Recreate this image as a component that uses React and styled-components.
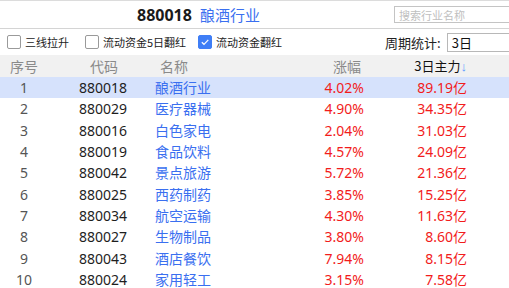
import styled, { createGlobalStyle } from "styled-components";

const GlobalStyle = createGlobalStyle`
  html, body {
    margin: 0;
    padding: 0;
    background: #fff;
    overflow: hidden;
  }
  body {
    font-family: "Noto Sans", "Noto Sans CJK SC", sans-serif;
  }
`;

const rows = [
  { no: 1, code: "880018", name: "酿酒行业", change: "4.02%", main: "89.19亿" },
  { no: 2, code: "880029", name: "医疗器械", change: "4.90%", main: "34.35亿" },
  { no: 3, code: "880016", name: "白色家电", change: "2.04%", main: "31.03亿" },
  { no: 4, code: "880019", name: "食品饮料", change: "4.57%", main: "24.09亿" },
  { no: 5, code: "880042", name: "景点旅游", change: "5.72%", main: "21.36亿" },
  { no: 6, code: "880025", name: "西药制药", change: "3.85%", main: "15.25亿" },
  { no: 7, code: "880034", name: "航空运输", change: "4.30%", main: "11.63亿" },
  { no: 8, code: "880027", name: "生物制品", change: "3.80%", main: "8.60亿" },
  { no: 9, code: "880043", name: "酒店餐饮", change: "7.94%", main: "8.15亿" },
  { no: 10, code: "880024", name: "家用轻工", change: "3.15%", main: "7.58亿" },
];

const Container = styled.div`
  width: 100%;
  height: 288px;
  overflow: hidden;
  border-top: 1px solid #dcdcdc;
  box-sizing: border-box;
`;

const Top = styled.div`
  height: 27px;
  display: flex;
  align-items: center;
  padding-left: 137px;
  border-bottom: 1px solid #d4d4d4;
  overflow: hidden;
`;

const Code = styled.span`
  font-size: 16px;
  font-weight: 700;
  color: #1a1a1a;
  width: 63px;
  flex-shrink: 0;
`;

const Industry = styled.span`
  font-size: 15px;
  color: #3a6ff0;
  width: 194px;
  flex-shrink: 0;
`;

const Search = styled.input`
  width: 130px;
  flex-shrink: 0;
  height: 17px;
  box-sizing: border-box;
  border: 1px solid #c4c4c4;
  padding: 0 4px;
  font-family: "Noto Sans CJK SC", sans-serif;
  font-size: 11px;
  outline: none;
  &::placeholder {
    color: #c0c0c0;
  }
`;

const Filters = styled.div`
  height: 26px;
  display: flex;
  align-items: center;
  padding-left: 7px;
  font-family: "Noto Sans CJK SC", sans-serif;
  overflow: hidden;
`;

const Check = styled.label`
  display: flex;
  flex-shrink: 0;
  align-items: center;
  gap: 4px;
  font-size: 11px;
  color: #222;
  margin-right: ${(props) => props.gap}px;
`;

const Box = styled.span`
  width: 14px;
  height: 14px;
  box-sizing: border-box;
  border-radius: 2px;
  border: 1px solid ${(props) => (props.checked ? "#3f7ef6" : "#9a9a9a")};
  background: ${(props) => (props.checked ? "#3f7ef6" : "#fff")};
  display: flex;
  align-items: center;
  justify-content: center;
`;

const Period = styled.div`
  flex-shrink: 0;
  display: flex;
  align-items: center;
  gap: 6px;
  font-size: 13px;
  color: #222;
`;

const Select = styled.div`
  width: 80px;
  height: 19px;
  box-sizing: border-box;
  border: 1px solid #b8b8b8;
  font-size: 13px;
  line-height: 17px;
  padding-left: 4px;
  color: #111;
`;

const Grid = styled.div`
  display: grid;
  grid-template-columns: 48px 102px 150px 68px 104px 1fr;
  font-size: 14px;
`;

const Head = styled.div`
  height: 22px;
  line-height: 22px;
  background: #f1f1f1;
  color: ${(props) => (props.active ? "#111" : "#8a8a8a")};
  font-size: ${(props) => (props.active ? 13 : 14)}px;
  text-align: ${(props) => props.align || "left"};
  padding-left: ${(props) => props.pl || 0}px;
  padding-right: ${(props) => props.pr || 0}px;
  font-family: "Noto Sans CJK SC", sans-serif;
`;

const Arrow = styled.span`
  color: #5b9cff;
  font-family: "Noto Sans", sans-serif;
`;

const Cell = styled.div`
  height: 21.33px;
  line-height: 21px;
  white-space: nowrap;
  background: ${(props) => (props.selected ? "#d6e2fc" : "#fff")};
  color: ${(props) => props.color};
  text-align: ${(props) => props.align || "left"};
  padding-left: ${(props) => props.pl || 0}px;
  padding-right: ${(props) => props.pr || 0}px;
`;

const Name = styled(Cell)`
  font-family: "Noto Sans CJK SC", sans-serif;
`;

const CheckBox = ({ checked, label, gap }) => (
  <Check gap={gap}>
    <Box checked={checked}>
      {checked && (
        <svg width="10" height="10" viewBox="0 0 10 10">
          <path d="M1.8 5.2 L4 7.3 L8.3 2.8" fill="none" stroke="#fff" strokeWidth="1.2" />
        </svg>
      )}
    </Box>
    {label}
  </Check>
);

const App = () => {
  return (
    <Container>
      <GlobalStyle />
      <Top>
        <Code>880018</Code>
        <Industry>酿酒行业</Industry>
        <Search placeholder="搜索行业名称" />
      </Top>
      <Filters>
        <CheckBox label="三线拉升" gap={16} />
        <CheckBox label="流动资金5日翻红" gap={12} />
        <CheckBox checked label="流动资金翻红" gap={103} />
        <Period>
          周期统计:
          <Select>3日</Select>
        </Period>
      </Filters>
      <Grid>
        <Head align="center">序号</Head>
        <Head pl={42}>代码</Head>
        <Head pl={10}>名称</Head>
        <Head align="right" pr={7}>涨幅</Head>
        <Head active align="right" pr={5}>
          3日主力<Arrow>↓</Arrow>
        </Head>
        <Head />
        {rows.map((row) => {
          const sel = row.no === 1;
          return [
            <Cell key={row.no + "a"} selected={sel} align="center" color="#555">
              {row.no}
            </Cell>,
            <Cell key={row.no + "b"} selected={sel} pl={31} color="#1e1e1e">
              {row.code}
            </Cell>,
            <Name key={row.no + "c"} selected={sel} pl={5} color="#3a6ff0">
              {row.name}
            </Name>,
            <Cell key={row.no + "d"} selected={sel} align="right" pr={4} color="#f21c1c">
              {row.change}
            </Cell>,
            <Cell key={row.no + "e"} selected={sel} align="right" pr={5} color="#f21c1c">
              {row.main}
            </Cell>,
            <Cell key={row.no + "f"} selected={sel} />,
          ];
        })}
      </Grid>
    </Container>
  );
};

export default App;
